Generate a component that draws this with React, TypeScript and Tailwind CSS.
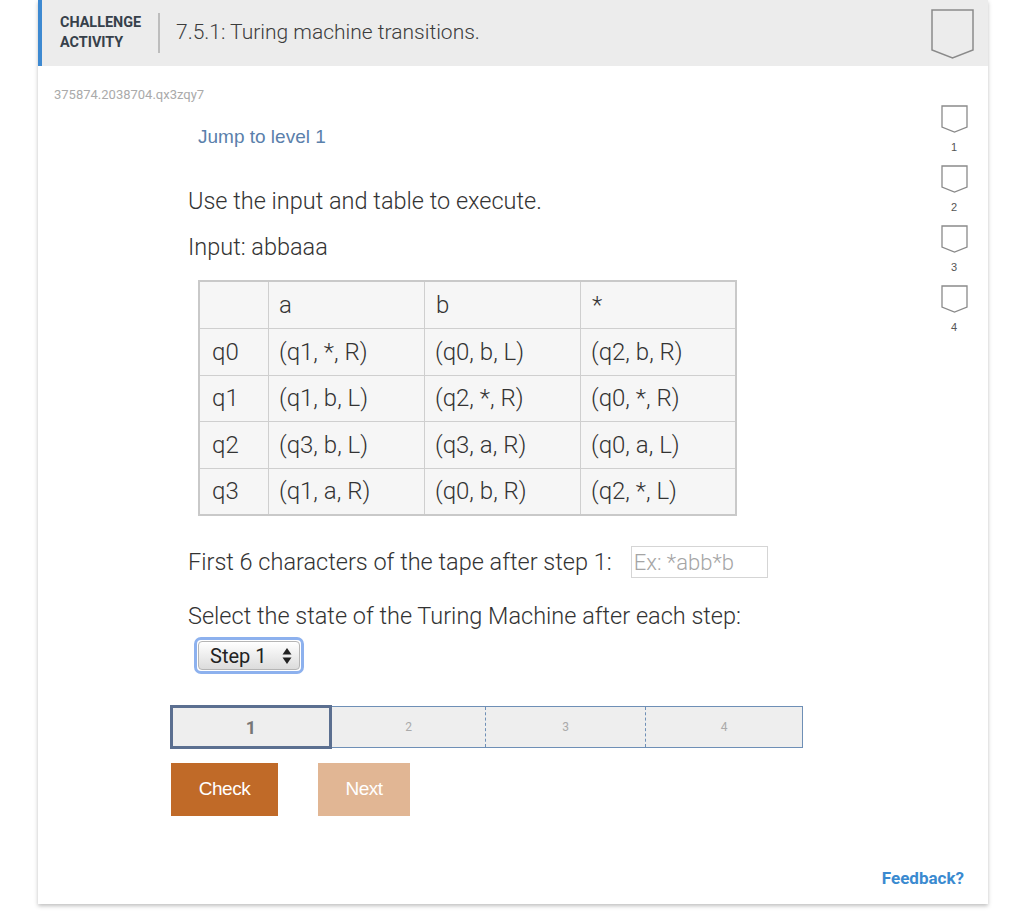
import React from 'react';

const rows = [
  ['q0', '(q1, *, R)', '(q0, b, L)', '(q2, b, R)'],
  ['q1', '(q1, b, L)', '(q2, *, R)', '(q0, *, R)'],
  ['q2', '(q3, b, L)', '(q3, a, R)', '(q0, a, L)'],
  ['q3', '(q1, a, R)', '(q0, b, R)', '(q2, *, L)'],
];

const roboto = { fontFamily: 'Roboto, "Liberation Sans", sans-serif' };

function Badge({ big }: { big?: boolean }) {
  if (big) {
    return (
      <svg width="43" height="50" viewBox="0 0 43 50">
        <path d="M1 1 H42 V41 L21.5 49 L1 41 Z" fill="none" stroke="#8a8a8a" strokeWidth="1.5" />
      </svg>
    );
  }
  return (
    <svg width="27" height="28" viewBox="0 0 27 28">
      <path d="M1 1 H26 V22 L13.5 27 L1 22 Z" fill="none" stroke="#8a8a8a" strokeWidth="1.3" />
    </svg>
  );
}

export default function App() {
  return (
    <div className="w-[1024px] h-[924px] bg-white pl-[38px]" style={roboto}>
      <div className="w-[950px] h-[904px] bg-white shadow-[0_2px_4px_rgba(0,0,0,0.25)] flex flex-col">
        {/* header */}
        <div className="h-[66px] bg-[#ececec] border-l-4 border-[#3d89d1] flex items-center pl-[18px] pr-[14px]">
          <div className="text-[14.4px] font-bold leading-[20px] text-[#36404a] w-[98px]">
            CHALLENGE
            <br />
            ACTIVITY
          </div>
          <div className="w-[2px] h-[40px] bg-[#bdbdbd] mr-[16px]" />
          <div className="text-[21px] text-[#3c3c3c] font-light">7.5.1: Turing machine transitions.</div>
          <div className="ml-auto mt-[2px]">
            <Badge big />
          </div>
        </div>

        {/* body */}
        <div className="flex flex-1">
          <div className="flex-1 flex flex-col">
            <div className="pl-[16px] pt-[21px] text-[13px] leading-[16px] text-[#aaaaaa]">375874.2038704.qx3zqy7</div>

            <div
              className="ml-[160px] mt-[23px] text-[19px] leading-[22px] text-[#5a80ab]"
              style={{ fontFamily: '"Liberation Sans", Arial, sans-serif' }}
            >
              Jump to level 1
            </div>

            <div className="ml-[150px] mt-[39px] text-[23.5px] leading-[28px] text-[#333] font-light">
              Use the input and table to execute.
            </div>
            <div className="ml-[150px] mt-[18px] text-[23.5px] leading-[28px] text-[#333] font-light">Input: abbaaa</div>

            <div className="ml-[160px] mt-[19px] w-[539px] border-2 border-[#c9c9c9] bg-[#f6f6f6]">
              <div className="grid grid-cols-[69px_156px_156px_154px] h-[46px] text-[24px] font-light text-[#333]">
                <div className="border-r border-[#cfcfcf]" />
                <div className="border-r border-[#cfcfcf] pl-[10px] flex items-center">a</div>
                <div className="border-r border-[#cfcfcf] pl-[11px] flex items-center">b</div>
                <div className="pl-[11px] flex items-center">*</div>
              </div>
              {rows.map((r) => (
                <div
                  key={r[0]}
                  className="grid grid-cols-[69px_156px_156px_154px] h-[46.5px] border-t border-[#cfcfcf] text-[24px] font-light text-[#333]"
                >
                  {r.map((c, i) => (
                    <div
                      key={i}
                      className={`${i < 3 ? 'border-r border-[#cfcfcf]' : ''} ${i === 0 ? 'pl-[12px]' : 'pl-[10px]'} flex items-center`}
                    >
                      {c}
                    </div>
                  ))}
                </div>
              ))}
            </div>

            <div className="ml-[150px] mt-[30px] flex items-center">
              <div className="text-[23.5px] leading-[28px] text-[#333] font-light">First 6 characters of the tape after step 1:</div>
              <div className="ml-[19px] w-[137px] h-[32px] border border-[#d5d5d5] flex items-center pl-[2px] text-[22px] font-light text-[#a5a5a5]">
                Ex: *abb*b
              </div>
            </div>

            <div className="ml-[150px] mt-[24px] text-[23.5px] leading-[28px] text-[#333] font-light">
              Select the state of the Turing Machine after each step:
            </div>

            <div className="ml-[156px] mt-[7px] w-[110px] h-[37px] rounded-[7px] border-[3px] border-[#8db1ee] p-[1px]">
              <div className="h-full rounded-[4px] bg-gradient-to-b from-[#ffffff] to-[#dcdcdc] border border-[#b5b5b5] flex items-center pl-[11px] pr-[7px]">
                <span className="text-[20px] text-[#222] font-normal">Step 1</span>
                <svg className="ml-auto" width="10" height="18" viewBox="0 0 10 18">
                  <path d="M5 1 L9.5 7.5 H0.5 Z" fill="#222" />
                  <path d="M5 17 L9.5 10.5 H0.5 Z" fill="#222" />
                </svg>
              </div>
            </div>

            <div className="ml-[132px] mt-[31px] flex w-[633px] h-[44px]">
              <div className="w-[162px] h-full border-[3px] border-[#5b6f90] bg-[#eeeeee] flex items-center justify-center text-[18px] font-bold text-[#777]">
                1
              </div>
              <div className="flex-1 flex border-y border-r border-[#6e8fb6] bg-[#eeeeee] my-[1px] text-[12px] text-[#aaa]">
                <div className="w-[154px] flex items-center justify-center border-r border-dashed border-[#6e8fb6]">2</div>
                <div className="w-[160px] flex items-center justify-center border-r border-dashed border-[#6e8fb6]">3</div>
                <div className="flex-1 flex items-center justify-center">4</div>
              </div>
            </div>

            <div className="ml-[133px] mt-[14px] flex gap-[40px]" style={{ fontFamily: '"Liberation Sans", Arial, sans-serif' }}>
              <div className="w-[107px] h-[53px] bg-[#c06a28] text-white text-[19px] flex items-center justify-center tracking-[-0.5px]">
                Check
              </div>
              <div className="w-[92px] h-[53px] bg-[#e1b694] text-white text-[19px] flex items-center justify-center tracking-[-0.5px]">
                Next
              </div>
            </div>

            <div className="mt-auto mb-[13px] self-end mr-[-36px] text-[17px] font-bold text-[#3a8ad0]">Feedback?</div>
          </div>

          {/* right level column */}
          <div className="w-[60px] flex flex-col items-center pt-[39px] pr-[8px]" style={{ fontFamily: '"Liberation Sans", Arial, sans-serif' }}>
            {[1, 2, 3, 4].map((n) => (
              <div key={n} className="flex flex-col items-center h-[60px]">
                <Badge />
                <div className="text-[11px] leading-[12px] text-[#555] mt-[8px]">{n}</div>
              </div>
            ))}
          </div>
        </div>
      </div>
    </div>
  );
}
